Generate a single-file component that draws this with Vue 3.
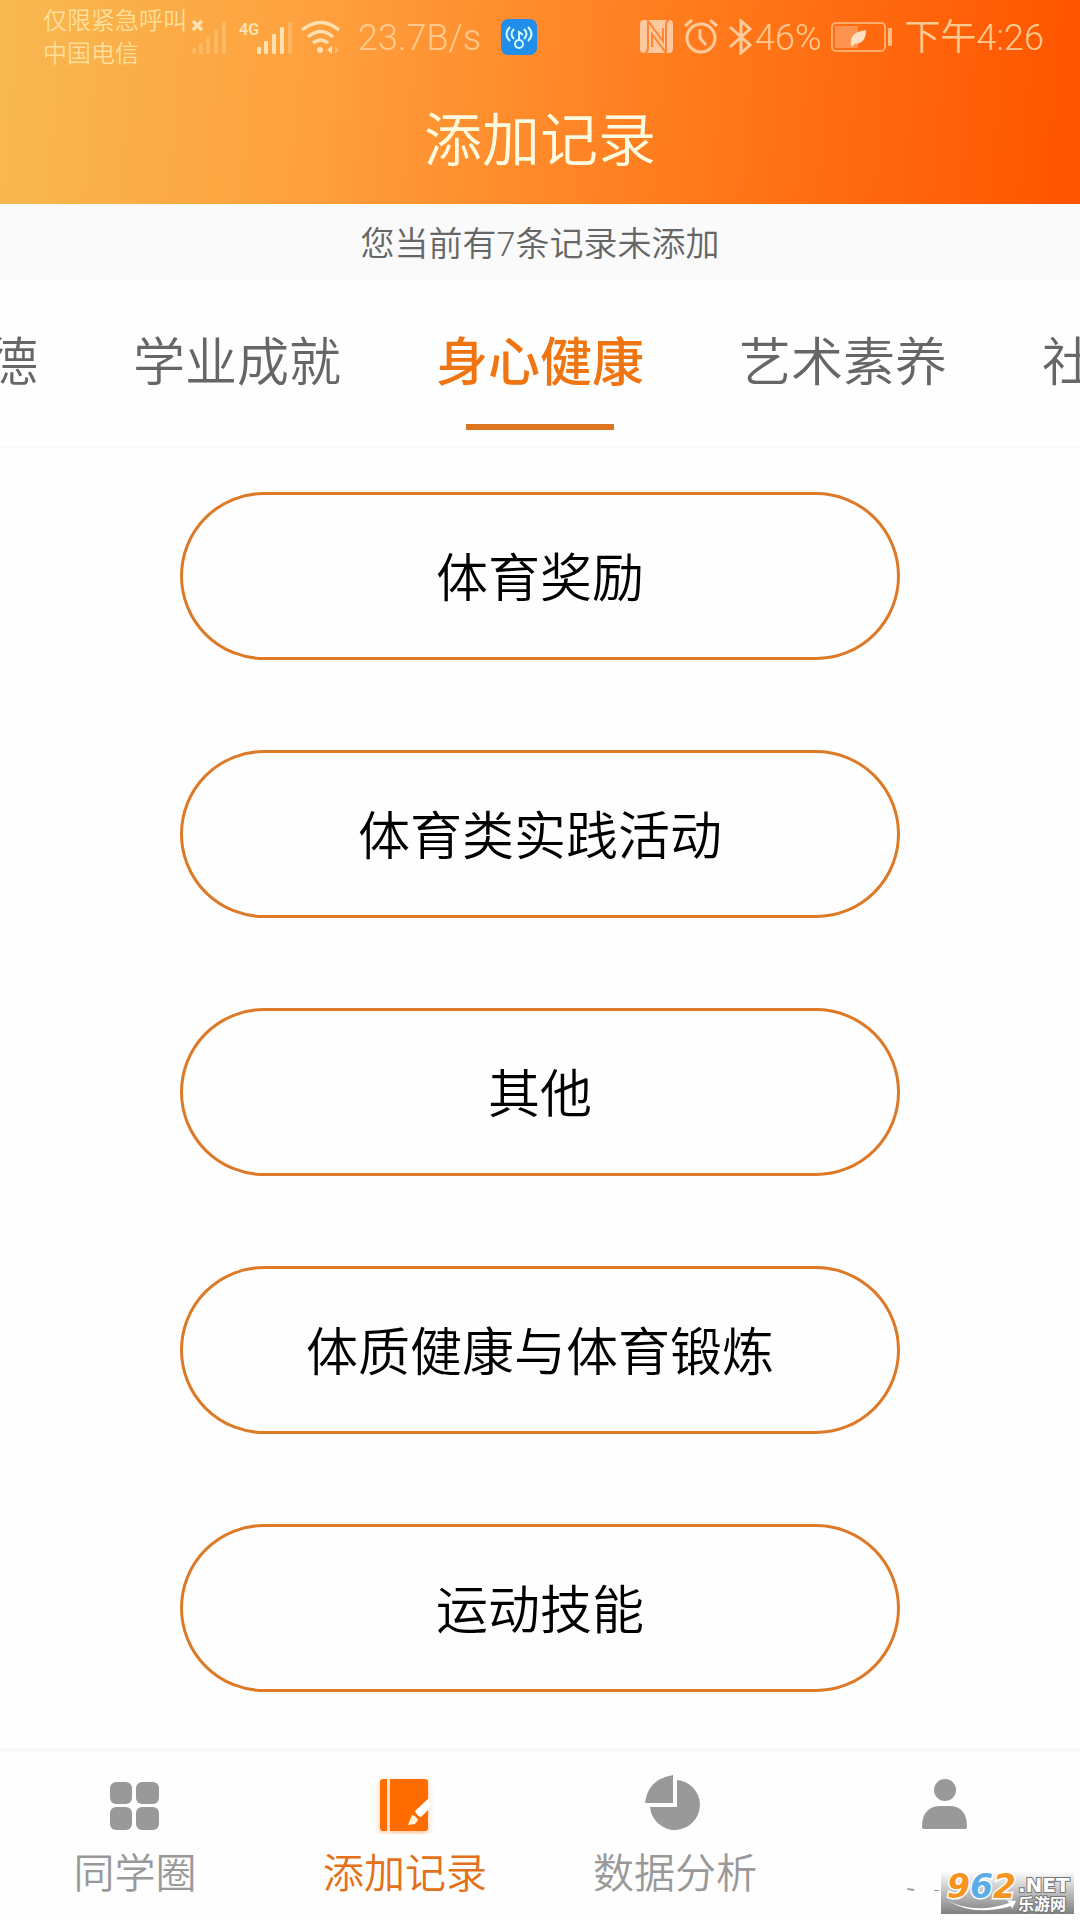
<script setup>
import { ref } from 'vue'

const pending = ref(7)

const tabs = ['思想品德', '学业成就', '身心健康', '艺术素养', '社会实践']
const activeTab = ref('身心健康')

const records = ['体育奖励', '体育类实践活动', '其他', '体质健康与体育锻炼', '运动技能']

const navs = [
    { key: 'circle', label: '同学圈' },
    { key: 'add', label: '添加记录' },
    { key: 'data', label: '数据分析' },
    { key: 'mine', label: '' }
]
const activeNav = ref('add')
</script>

<template>
    <div class="page">
        <header class="header">
            <div class="status">
                <div class="status-left">
                    <div class="carrier">
                        <span>仅限紧急呼叫</span>
                        <span>中国电信</span>
                    </div>
                    <!-- 信号 / WiFi -->
                    <svg class="signals" width="152" height="36" viewBox="0 0 152 36" fill="#ffe0b0">
                        <path d="M2 2l9 9M11 2l-9 9" stroke="#ffe0b0" stroke-width="3.5" />
                        <g opacity="0.3">
                            <rect x="1" y="29" width="4" height="6" rx="1" />
                            <rect x="8" y="24" width="4" height="11" rx="1" />
                            <rect x="15" y="18" width="4" height="17" rx="1" />
                            <rect x="23" y="11" width="4" height="24" rx="1" />
                            <rect x="31" y="3" width="4" height="32" rx="1" />
                        </g>
                        <text x="48" y="16" font-size="16" font-weight="bold" font-family="Roboto, sans-serif">4G</text>
                        <rect x="66" y="28" width="4" height="7" rx="1" />
                        <rect x="73" y="22" width="4" height="13" rx="1" />
                        <rect x="81" y="15" width="4" height="20" rx="1" />
                        <rect x="89" y="8" width="4" height="27" rx="1" />
                        <rect x="97" y="3" width="4" height="32" rx="1" opacity="0.3" />
                        <g fill="none" stroke="#ffe0b0" stroke-width="3.5">
                            <path d="M111 11q19-15 37 0" />
                            <path d="M117 18q13-11 25 0" />
                            <path d="M122 24q8-6 15 0" />
                        </g>
                        <circle cx="129" cy="31" r="3" />
                        <path d="M141 27v8l-5-4z" />
                        <path d="M144 27v8l4-4z" opacity="0.4" />
                    </svg>
                    <span class="status-text">23.7B/s</span>
                    <svg class="hotspot" width="36" height="36" viewBox="0 0 36 36">
                        <rect width="36" height="36" rx="7" fill="#208eea" />
                        <g fill="none" stroke="#d5ffff" stroke-width="2">
                            <circle cx="18" cy="25" r="4" />
                            <path d="M18 21v-8l4 3" />
                            <path d="M13 10q-5 5 0 10M23 10q5 5 0 10" />
                            <path d="M9 8q-7 7 0 14M27 8q7 7 0 14" />
                        </g>
                    </svg>
                </div>
                <div class="status-right">
                    <svg width="116" height="36" viewBox="0 0 116 36" fill="none" stroke="#ffcb9c">
                        <rect x="1" y="1" width="33" height="33" rx="4" fill="#ffc9a0" stroke="none" />
                        <path d="M9 1v28q0 4-3 5M9 2l15 20V9M27 34L13 15v13M27 34V6q0-4 3-5" stroke="#ff8434" stroke-width="2" />
                        <circle cx="62" cy="19" r="14" stroke-width="3" />
                        <path d="M61 10v9l6 7" stroke-width="3" />
                        <path d="M46 7l7-6M78 7l-7-6" stroke-width="3" />
                        <path d="M91 8l20 18-9 8V2l9 8-20 18" stroke-width="3" />
                    </svg>
                    <span class="status-text">46%</span>
                    <svg class="battery" width="62" height="30" viewBox="0 0 62 30">
                        <rect x="1" y="1" width="53" height="28" rx="4" fill="none" stroke="#ffac6c" stroke-width="2" />
                        <rect x="4" y="4" width="23" height="22" fill="#ff9450" />
                        <path d="M20 23q-2-13 15-15q0 14-12 14l7-9-9 12z" fill="#ffe0c4" />
                        <rect x="57" y="6" width="4" height="18" rx="1" fill="#ffbc84" />
                    </svg>
                    <span class="status-text">下午4:26</span>
                </div>
            </div>
            <h1>添加记录</h1>
        </header>

        <p class="notice">您当前有{{ pending }}条记录未添加</p>

        <nav class="tabs">
            <button
                v-for="tab in tabs"
                :key="tab"
                class="tab"
                :class="{ active: tab === activeTab }"
                @click="activeTab = tab"
            >{{ tab }}</button>
        </nav>

        <main class="list">
            <button v-for="item in records" :key="item" class="record">{{ item }}</button>
        </main>

        <footer class="footer">
            <a
                v-for="nav in navs"
                :key="nav.key"
                href="#"
                class="nav"
                :class="{ active: nav.key === activeNav }"
                @click.prevent="activeNav = nav.key"
            >
                <svg width="64" height="64" viewBox="1 0 64 64" fill="currentColor">
                    <g v-if="nav.key === 'circle'">
                        <rect x="8" y="12" width="22" height="22" rx="6" />
                        <rect x="34" y="12" width="23" height="22" rx="6" />
                        <rect x="8" y="37" width="22" height="23" rx="6" />
                        <rect x="34" y="37" width="23" height="23" rx="6" />
                    </g>
                    <g v-else-if="nav.key === 'add'">
                        <g class="book">
                            <path d="M11 9h4v52h-4q-3 0-3-3V12q0-3 3-3z" />
                            <path d="M18 9h35q3 0 3 3v46q0 3-3 3H18z" />
                        </g>
                        <path d="M57 28L43 41q2 5 6 6l9-9z" fill="#fff" />
                        <path d="M40 45q4 1 6 5l-3 4-7 1z" fill="#fff3d8" />
                    </g>
                    <g v-else-if="nav.key === 'data'">
                        <path d="M31 5v28H3Q6 9 31 5z" />
                        <path d="M35 10a25 25 0 1 1-27 27h27z" />
                    </g>
                    <g v-else>
                        <circle cx="33" cy="20" r="11" />
                        <path d="M10 57q0-21 19-21h8q18 0 18 21 0 2-3 2H13q-3 0-3-2z" />
                    </g>
                </svg>
                <span v-if="nav.label">{{ nav.label }}</span>
                <svg v-else width="76" height="80" viewBox="0 0 76 80" fill="currentColor">
                    <path d="M0 54l7 1v2l-6-1zM27 56h5v1h-5zM42 56h3v1h-3z" />
                </svg>
            </a>
            <!-- 站点角标 -->
            <div class="badge">
                <svg width="133" height="43" viewBox="0 0 133 43" font-weight="bold" paint-order="stroke">
                    <text x="6" y="27" font-family="DejaVu Sans, sans-serif" font-style="italic" font-size="33" stroke="#fff" stroke-width="3">
                        <tspan fill="#f7941d">9</tspan><tspan fill="#5aaee5">6</tspan><tspan fill="#f7941d">2</tspan>
                    </text>
                    <g fill="#fff" stroke="#777" stroke-width="2">
                        <text x="77" y="21" font-size="20" font-family="DejaVu Sans, sans-serif">.NET</text>
                        <text x="77" y="39" font-size="16" font-family="Noto Sans CJK SC, sans-serif">乐游网</text>
                    </g>
                    <path d="M6 29q27 15 62 3l-2-3 9 1-4 8-1-3q-38 11-64-6z" fill="#fff" />
                </svg>
            </div>
        </footer>
    </div>
</template>

<style>
body {
    margin: 0;
    background-color: #fefefe;
}
</style>

<style scoped>
.page {
    display: flex;
    flex-direction: column;
    min-height: 100vh;
    overflow: hidden;
    background-color: #fefefe;
    font-family: Roboto, "Noto Sans CJK SC", sans-serif;
    font-weight: 350;
}

button {
    font-family: inherit;
    font-weight: inherit;
    padding: 0;
    border: none;
    background: none;
    cursor: pointer;
}

.header {
    background: linear-gradient(95deg, #f8b950, #ff9e3c 31%, #ff7a1c 64%, #ff5500 98%);
}

.status {
    display: flex;
    justify-content: space-between;
    height: 74px;
    padding: 0 36px 0 43px;
}

.status-left,
.status-right {
    display: flex;
    align-items: center;
    color: #ffca90;
}

.carrier {
    display: flex;
    flex-direction: column;
    width: 148px;
    padding-top: 2px;
    font-size: 24px;
    line-height: 33px;
    white-space: nowrap;
    color: #ffdf9c;
}

.status-text {
    padding-top: 2px;
    font-size: 36px;
    line-height: 72px;
}

.signals {
    margin-right: 15px;
}

.hotspot {
    margin-left: 20px;
}

.battery {
    margin: 0 12px 0 9px;
}

h1 {
    margin: 0;
    padding-top: 4px;
    font-size: 58px;
    line-height: 126px;
    font-weight: 350;
    text-align: center;
    color: #fffbe0;
}

.notice {
    margin: 0;
    padding-top: 4px;
    font-size: 34px;
    line-height: 72px;
    text-align: center;
    color: #666;
    background-color: #fafafa;
}

.tabs {
    display: flex;
    justify-content: center;
    gap: 95px;
    height: 166px;
    border-bottom: 2px solid #fafafa;
}

.tab {
    display: flex;
    flex: none;
    flex-direction: column;
    align-items: center;
    padding-top: 4px;
    font-size: 52px;
    line-height: 160px;
    color: #666;
}

.tab.active {
    font-weight: 500;
    color: #f07410;
}

.tab.active::after {
    content: "";
    width: 148px;
    height: 6px;
    margin-top: -20px;
    background-color: #dc7420;
}

.list {
    display: flex;
    flex: 1;
    flex-direction: column;
    align-items: center;
    gap: 90px;
    padding: 44px 0 56px;
}

.record {
    width: 66.67%;
    height: 168px;
    padding-bottom: 4px;
    border: 3px solid #dc7a28;
    border-radius: 84px;
    font-size: 52px;
    color: #000;
}

.footer {
    position: relative;
    display: flex;
    height: 168px;
    border-top: 4px solid #f8f8f8;
}

.nav {
    display: flex;
    flex: 1;
    flex-direction: column;
    align-items: center;
    padding-top: 18px;
    font-size: 41px;
    line-height: 80px;
    color: #999;
    text-decoration: none;
}

.nav.active {
    color: #e2711a;
}

.book {
    color: #ff6d00;
    filter: drop-shadow(0 3px 3px #ffc8a0);
}

.badge {
    position: absolute;
    right: 6px;
    bottom: 6px;
    height: 43px;
    background: linear-gradient(#fefefe, #808080);
}
</style>
